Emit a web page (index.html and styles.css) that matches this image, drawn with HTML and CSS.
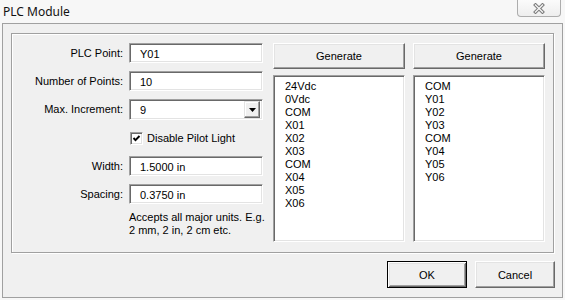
FILE: index.html
```html
<!DOCTYPE html>
<html>
<head>
<meta charset="utf-8">
<link rel="stylesheet" href="styles.css">
</head>
<body>
<div class="window">
  <div class="titlebar">
    <span class="title">PLC Module</span>
    <div class="close">
      <svg width="14" height="11" viewBox="0 0 14 11">
        <path d="M3.5 2 L10.5 9 M10.5 2 L3.5 9" stroke="#7a7a7a" stroke-width="3.4" stroke-linecap="square" fill="none"/>
        <path d="M3.5 2 L10.5 9 M10.5 2 L3.5 9" stroke="#f4f4f4" stroke-width="1.4" stroke-linecap="square" fill="none"/>
      </svg>
    </div>
  </div>
  <div class="client">
    <div class="group">
      <div class="form">
        <div class="label">PLC Point:</div>
        <div class="field">Y01</div>
        <div class="label">Number of Points:</div>
        <div class="field">10</div>
        <div class="label">Max. Increment:</div>
        <div class="field select"><span>9</span><span class="drop"><svg width="7" height="4" viewBox="0 0 7 4"><path d="M0 0 H7 L3.5 4 Z" fill="#000"/></svg></span></div>
        <div class="check-row">
          <span class="checkbox"><svg width="9" height="9" viewBox="0 0 9 9"><path d="M1.5 4 L3.5 6.2 L7.5 2" stroke="#000" stroke-width="1.9" fill="none"/></svg></span>
          <span>Disable Pilot Light</span>
        </div>
        <div class="label">Width:</div>
        <div class="field">1.5000 in</div>
        <div class="label">Spacing:</div>
        <div class="field">0.3750 in</div>
        <div class="help">Accepts all major units. E.g.<br>2 mm, 2 in, 2 cm etc.</div>
      </div>
      <div class="listcol">
        <div class="btn">Generate</div>
        <div class="listbox">
          <div>24Vdc</div><div>0Vdc</div><div>COM</div><div>X01</div><div>X02</div><div>X03</div><div>COM</div><div>X04</div><div>X05</div><div>X06</div>
        </div>
      </div>
      <div class="listcol">
        <div class="btn">Generate</div>
        <div class="listbox">
          <div>COM</div><div>Y01</div><div>Y02</div><div>Y03</div><div>COM</div><div>Y04</div><div>Y05</div><div>Y06</div>
        </div>
      </div>
    </div>
    <div class="actions">
      <div class="btn action default">OK</div>
      <div class="btn action">Cancel</div>
    </div>
  </div>
</div>
</body>
</html>
```
FILE: styles.css
```css
* { box-sizing: border-box; }
body {
  margin: 0;
  background: #f7f7f7;
  font-family: "Liberation Sans", Arial, sans-serif;
  font-size: 11px;
  color: #000;
}
.window {
  width: 565px;
  height: 300px;
  display: flex;
  flex-direction: column;
  background: #f7f7f7;
  overflow: hidden;
}
.titlebar {
  height: 23px;
  flex: none;
  display: flex;
  justify-content: space-between;
  align-items: flex-start;
  padding: 0 4px 0 3px;
}
.title {
  font-family: "Noto Sans", sans-serif;
  font-size: 12px;
  line-height: 23px;
  color: #111;
}
.close {
  width: 44px;
  height: 17px;
  border: 1px solid #adadad;
  border-top: none;
  border-radius: 0 0 4px 4px;
  background: linear-gradient(#fbfbfb, #eeeeee);
  display: flex;
  align-items: center;
  justify-content: center;
}
.client {
  flex: 1;
  margin: 0 2px 2px 2px;
  border: 1px solid #a0a0a0;
  background: #f0f0f0;
  display: flex;
  flex-direction: column;
}
.group {
  margin: 9px 8px 0 8px;
  height: 220px;
  flex: none;
  border: 1px solid #a0a0a0;
  box-shadow: inset 1px 1px #fff, 1px 1px #fff;
  display: flex;
  gap: 8px;
  padding: 9px 8px 0 0;
}
.form {
  width: 251px;
  margin-right: 2px;
  display: grid;
  grid-template-columns: 111px 134px;
  grid-template-rows: 20px 20px 21px 20px 20px 20px auto;
  column-gap: 6px;
  row-gap: 8px;
  align-content: start;
}
.label {
  text-align: right;
  line-height: 20px;
  white-space: nowrap;
}
.field {
  background: #fff;
  border: 1px solid;
  border-color: #a0a0a0 #fff #fff #a0a0a0;
  box-shadow: inset 1px 1px #696969, inset -1px -1px #e3e3e3;
  padding-left: 10px;
  line-height: 19px;
  padding-top: 1px;
}
.select {
  display: flex;
  justify-content: space-between;
  align-items: center;
  padding: 1px 2px 0 10px;
}
.drop {
  width: 16px;
  height: 17px;
  background: #f0f0f0;
  border: 1px solid;
  border-color: #e3e3e3 #696969 #696969 #e3e3e3;
  box-shadow: inset -1px -1px #a0a0a0, inset 1px 1px #fff;
  display: flex;
  align-items: center;
  justify-content: center;
  margin-top: -1px;
}
.check-row {
  grid-column: 2;
  display: flex;
  align-items: center;
  gap: 4px;
  padding-left: 1px;
}
.checkbox {
  width: 13px;
  height: 13px;
  background: #fff;
  border: 1px solid;
  border-color: #a0a0a0 #fff #fff #a0a0a0;
  box-shadow: inset 1px 1px #696969, inset -1px -1px #e3e3e3;
  display: flex;
  align-items: center;
  justify-content: center;
}
.help {
  grid-column: 2;
  line-height: 13px;
  margin-top: -1px;
  white-space: nowrap;
}
.listcol {
  width: 132px;
  display: flex;
  flex-direction: column;
}
.btn {
  height: 26px;
  background: #f0f0f0;
  border: 1px solid;
  border-color: #fff #696969 #696969 #fff;
  box-shadow: inset -1px -1px #a0a0a0, inset 1px 1px #e3e3e3;
  display: flex;
  align-items: center;
  justify-content: center;
}
.listbox {
  margin-top: 6px;
  height: 167px;
  background: #fff;
  border: 1px solid;
  border-color: #a0a0a0 #fff #fff #a0a0a0;
  box-shadow: inset 1px 1px #696969, inset -1px -1px #e3e3e3;
  padding: 4px 0 0 11px;
  line-height: 13px;
}
.actions {
  display: flex;
  justify-content: flex-end;
  gap: 8px;
  padding: 8px 7px 0 0;
}
.action {
  width: 80px;
  height: 27px;
}
.default {
  border: 1px solid #000;
  box-shadow: inset 1px 1px #fff, inset -1px -1px #696969, inset 2px 2px #e3e3e3, inset -2px -2px #a0a0a0;
}
```
